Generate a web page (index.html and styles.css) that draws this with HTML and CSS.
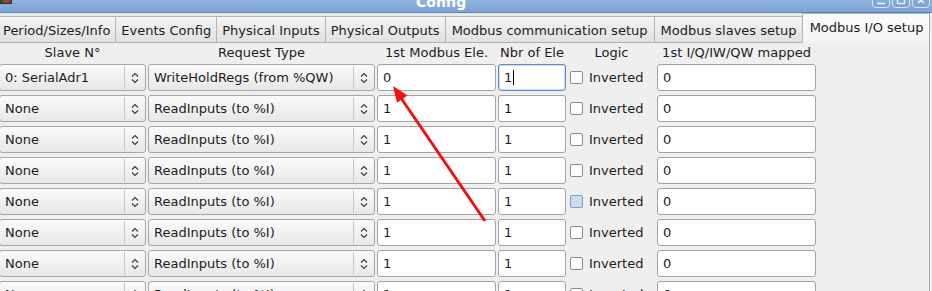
FILE: index.html
```html
<!DOCTYPE html>
<html>
<head>
<meta charset="utf-8">
<link rel="stylesheet" href="styles.css">
</head>
<body>
<div class="window">
  <div class="titlebar">
    <div class="wm-menu"><span class="wm-dot"></span></div>
    <div class="title">Config</div>
    <div class="wm-buttons">
      <span class="wm-btn"><svg width="12" height="12" viewBox="0 0 12 12"><path d="M2 9.5H10" stroke="#eef3fa" stroke-width="1.6" fill="none"/></svg></span>
      <span class="wm-btn"><svg width="12" height="12" viewBox="0 0 12 12"><rect x="2.5" y="2.5" width="7" height="7" stroke="#eef3fa" stroke-width="1.4" fill="none"/></svg></span>
      <span class="wm-btn"><svg width="12" height="12" viewBox="0 0 12 12"><path d="M3 3L9 9M9 3L3 9" stroke="#eef3fa" stroke-width="1.6" fill="none"/></svg></span>
    </div>
  </div>
  <div class="tabbar">
    <div class="tab first">Period/Sizes/Info</div>
    <div class="tab">Events Config</div>
    <div class="tab">Physical Inputs</div>
    <div class="tab">Physical Outputs</div>
    <div class="tab wide">Modbus communication setup</div>
    <div class="tab">Modbus slaves setup</div>
    <div class="tab active">Modbus I/O setup</div>
  </div>
  <div class="pane">
    <div class="grid">
      <div class="head">Slave N°</div>
      <div class="head">Request Type</div>
      <div class="head">1st Modbus Ele.</div>
      <div class="head">Nbr of Ele</div>
      <div class="head">Logic</div>
      <div class="head">1st I/Q/IW/QW mapped</div>

      <div class="combo"><span class="combo-text">0: SerialAdr1</span><span class="combo-btn"><svg width="8" height="12" viewBox="0 0 8 12"><path d="M1 4.5L4 1.5L7 4.5M1 7.5L4 10.5L7 7.5" stroke="#3a3a3a" stroke-width="1.1" fill="none"/></svg></span></div>
      <div class="combo"><span class="combo-text">WriteHoldRegs (from %QW)</span><span class="combo-btn"><svg width="8" height="12" viewBox="0 0 8 12"><path d="M1 4.5L4 1.5L7 4.5M1 7.5L4 10.5L7 7.5" stroke="#3a3a3a" stroke-width="1.1" fill="none"/></svg></span></div>
      <div class="field">0</div>
      <div class="field focused">1<span class="caret"></span></div>
      <label class="check"><span class="box"></span>Inverted</label>
      <div class="field">0</div>

      <div class="combo"><span class="combo-text">None</span><span class="combo-btn"><svg width="8" height="12" viewBox="0 0 8 12"><path d="M1 4.5L4 1.5L7 4.5M1 7.5L4 10.5L7 7.5" stroke="#3a3a3a" stroke-width="1.1" fill="none"/></svg></span></div>
      <div class="combo"><span class="combo-text">ReadInputs (to %I)</span><span class="combo-btn"><svg width="8" height="12" viewBox="0 0 8 12"><path d="M1 4.5L4 1.5L7 4.5M1 7.5L4 10.5L7 7.5" stroke="#3a3a3a" stroke-width="1.1" fill="none"/></svg></span></div>
      <div class="field">1</div>
      <div class="field">1</div>
      <label class="check"><span class="box"></span>Inverted</label>
      <div class="field">0</div>

      <div class="combo"><span class="combo-text">None</span><span class="combo-btn"><svg width="8" height="12" viewBox="0 0 8 12"><path d="M1 4.5L4 1.5L7 4.5M1 7.5L4 10.5L7 7.5" stroke="#3a3a3a" stroke-width="1.1" fill="none"/></svg></span></div>
      <div class="combo"><span class="combo-text">ReadInputs (to %I)</span><span class="combo-btn"><svg width="8" height="12" viewBox="0 0 8 12"><path d="M1 4.5L4 1.5L7 4.5M1 7.5L4 10.5L7 7.5" stroke="#3a3a3a" stroke-width="1.1" fill="none"/></svg></span></div>
      <div class="field">1</div>
      <div class="field">1</div>
      <label class="check"><span class="box"></span>Inverted</label>
      <div class="field">0</div>

      <div class="combo"><span class="combo-text">None</span><span class="combo-btn"><svg width="8" height="12" viewBox="0 0 8 12"><path d="M1 4.5L4 1.5L7 4.5M1 7.5L4 10.5L7 7.5" stroke="#3a3a3a" stroke-width="1.1" fill="none"/></svg></span></div>
      <div class="combo"><span class="combo-text">ReadInputs (to %I)</span><span class="combo-btn"><svg width="8" height="12" viewBox="0 0 8 12"><path d="M1 4.5L4 1.5L7 4.5M1 7.5L4 10.5L7 7.5" stroke="#3a3a3a" stroke-width="1.1" fill="none"/></svg></span></div>
      <div class="field">1</div>
      <div class="field">1</div>
      <label class="check"><span class="box"></span>Inverted</label>
      <div class="field">0</div>

      <div class="combo"><span class="combo-text">None</span><span class="combo-btn"><svg width="8" height="12" viewBox="0 0 8 12"><path d="M1 4.5L4 1.5L7 4.5M1 7.5L4 10.5L7 7.5" stroke="#3a3a3a" stroke-width="1.1" fill="none"/></svg></span></div>
      <div class="combo"><span class="combo-text">ReadInputs (to %I)</span><span class="combo-btn"><svg width="8" height="12" viewBox="0 0 8 12"><path d="M1 4.5L4 1.5L7 4.5M1 7.5L4 10.5L7 7.5" stroke="#3a3a3a" stroke-width="1.1" fill="none"/></svg></span></div>
      <div class="field">1</div>
      <div class="field">1</div>
      <label class="check"><span class="box hover"></span>Inverted</label>
      <div class="field">0</div>

      <div class="combo"><span class="combo-text">None</span><span class="combo-btn"><svg width="8" height="12" viewBox="0 0 8 12"><path d="M1 4.5L4 1.5L7 4.5M1 7.5L4 10.5L7 7.5" stroke="#3a3a3a" stroke-width="1.1" fill="none"/></svg></span></div>
      <div class="combo"><span class="combo-text">ReadInputs (to %I)</span><span class="combo-btn"><svg width="8" height="12" viewBox="0 0 8 12"><path d="M1 4.5L4 1.5L7 4.5M1 7.5L4 10.5L7 7.5" stroke="#3a3a3a" stroke-width="1.1" fill="none"/></svg></span></div>
      <div class="field">1</div>
      <div class="field">1</div>
      <label class="check"><span class="box"></span>Inverted</label>
      <div class="field">0</div>

      <div class="combo"><span class="combo-text">None</span><span class="combo-btn"><svg width="8" height="12" viewBox="0 0 8 12"><path d="M1 4.5L4 1.5L7 4.5M1 7.5L4 10.5L7 7.5" stroke="#3a3a3a" stroke-width="1.1" fill="none"/></svg></span></div>
      <div class="combo"><span class="combo-text">ReadInputs (to %I)</span><span class="combo-btn"><svg width="8" height="12" viewBox="0 0 8 12"><path d="M1 4.5L4 1.5L7 4.5M1 7.5L4 10.5L7 7.5" stroke="#3a3a3a" stroke-width="1.1" fill="none"/></svg></span></div>
      <div class="field">1</div>
      <div class="field">1</div>
      <label class="check"><span class="box"></span>Inverted</label>
      <div class="field">0</div>

      <div class="combo"><span class="combo-text">None</span><span class="combo-btn"><svg width="8" height="12" viewBox="0 0 8 12"><path d="M1 4.5L4 1.5L7 4.5M1 7.5L4 10.5L7 7.5" stroke="#3a3a3a" stroke-width="1.1" fill="none"/></svg></span></div>
      <div class="combo"><span class="combo-text">ReadInputs (to %I)</span><span class="combo-btn"><svg width="8" height="12" viewBox="0 0 8 12"><path d="M1 4.5L4 1.5L7 4.5M1 7.5L4 10.5L7 7.5" stroke="#3a3a3a" stroke-width="1.1" fill="none"/></svg></span></div>
      <div class="field">1</div>
      <div class="field">1</div>
      <label class="check"><span class="box"></span>Inverted</label>
      <div class="field">0</div>
    </div>
  </div>
  <svg class="annotation" width="932" height="291" viewBox="0 0 932 291">
    <line x1="485" y1="221" x2="401" y2="98" stroke="#f01212" stroke-width="3"/>
    <polygon points="393,86 407.5,95.5 397,102.8" fill="#f01212"/>
  </svg>
</div>
</body>
</html>
```

FILE: styles.css
```css
html, body {
  margin: 0;
  padding: 0;
}
body {
  width: 932px;
  height: 291px;
  overflow: hidden;
  background: #efefef;
  font-family: "DejaVu Sans", "Noto Sans", sans-serif;
  font-size: 13px;
  color: #1c1c1c;
}
.window {
  position: relative;
  width: 932px;
  height: 291px;
  overflow: hidden;
}

/* title bar */
.titlebar {
  height: 12px;
  display: flex;
  align-items: flex-start;
  overflow: hidden;
  background: linear-gradient(#8fb2dd, #7ea4d5);
  border-bottom: 1px solid #5d80b0;
}
.wm-menu {
  width: 12px;
  height: 4px;
  background: #4a4a4a;
  border: 1px solid #2e2e2e;
  border-top: none;
  box-sizing: border-box;
  display: flex;
  justify-content: center;
}
.wm-dot {
  width: 5px;
  height: 3px;
  background: #b43a3a;
  border-radius: 0 0 3px 3px;
}
.title {
  margin-left: 404px;
  margin-top: -6px;
  line-height: 16px;
  font-size: 14px;
  font-weight: bold;
  color: #ffffff;
}
.wm-buttons {
  margin-left: auto;
  margin-right: 2px;
  margin-top: -7px;
  display: flex;
  gap: 2px;
}
.wm-btn {
  width: 18px;
  height: 15px;
  border: 1px solid #dbe6f4;
  border-radius: 4px;
  display: flex;
  align-items: flex-end;
  justify-content: center;
  padding-bottom: 1px;
  box-sizing: border-box;
  background: linear-gradient(#93b5df, #7ba1d3);
}

/* tabs */
.tabbar {
  height: 29px;
  display: flex;
  align-items: flex-end;
  background: #e9e9e9;
  width: 930px;
}
.tab {
  height: 26px;
  line-height: 27px;
  padding: 0 5px;
  border-left: 1px solid #b3b3b3;
  border-top: 1px solid #b3b3b3;
  box-sizing: border-box;
  background: linear-gradient(#f3f3f3, #e1e1e1);
  white-space: nowrap;
  color: #1c1c1c;
}
.tab.first {
  margin-left: -3px;
}
.tab.wide {
  padding: 0 7px 0 6px;
}
.tab.active {
  flex: 1;
  height: 30px;
  margin-bottom: -1px;
  line-height: 28px;
  padding: 0 4px 0 7px;
  border-right: 1px solid #a9a9a9;
  background: linear-gradient(#fbfbfb, #f3f3f3);
  position: relative;
  z-index: 1;
}

/* pane */
.pane {
  width: 930px;
  height: 260px;
  border-top: 1px solid #b0b0b0;
  border-right: 1px solid #a9a9a9;
  box-sizing: border-box;
  background: #efefef;
}
.grid {
  display: grid;
  grid-template-columns: 147px 227px 119px 68px 87px 159px;
  grid-auto-rows: 27px;
  grid-template-rows: 14px;
  column-gap: 2px;
  row-gap: 4px;
  padding-top: 3px;
  margin-left: -1px;
}
.head {
  text-align: center;
  line-height: 14px;
  white-space: nowrap;
}

/* combo box */
.combo {
  display: flex;
  box-sizing: border-box;
  border: 1px solid #a6a6a6;
  border-radius: 3px;
  background: linear-gradient(#fbfbfb, #e7e7e7);
}
.combo-text {
  flex: 1;
  padding-left: 5px;
  line-height: 25px;
  white-space: nowrap;
}
.combo-btn {
  width: 20px;
  border-left: 1px solid #c6c6c6;
  display: flex;
  align-items: center;
  justify-content: center;
  margin: 1px 0;
}

/* line edit */
.field {
  box-sizing: border-box;
  border: 1px solid #a3a3a3;
  border-radius: 3px;
  background: #ffffff;
  padding-left: 5px;
  line-height: 25px;
  display: flex;
  align-items: center;
}
.field.focused {
  border-color: #5d8ccb;
  box-shadow: inset 0 0 0 1px #c9dbf2;
}
.caret {
  display: inline-block;
  width: 1px;
  height: 15px;
  margin-left: 1px;
  background: #000000;
}

/* checkbox */
.check {
  display: flex;
  align-items: center;
  padding-left: 2px;
  gap: 6px;
  white-space: nowrap;
}
.box {
  width: 13px;
  height: 13px;
  box-sizing: border-box;
  border: 1px solid #8c8c8c;
  border-radius: 2px;
  background: #ffffff;
}
.box.hover {
  border-color: #7e9ec9;
  background: #cddcef;
}

/* annotation arrow overlay */
.annotation {
  position: absolute;
  left: 0;
  top: 0;
  pointer-events: none;
  z-index: 5;
}
```
